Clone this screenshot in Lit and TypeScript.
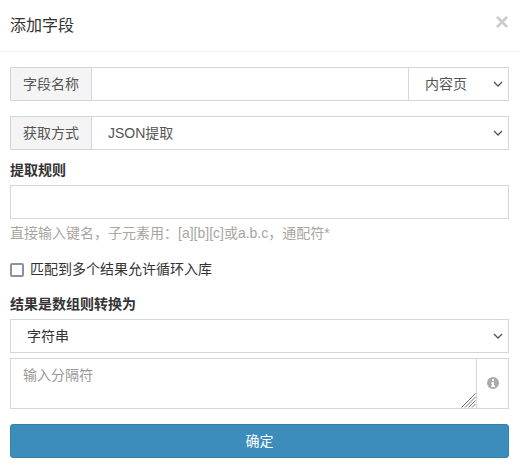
import { LitElement, html, css } from "lit";
import { customElement } from "lit/decorators.js";

const chevron =
  "data:image/svg+xml,%3Csvg xmlns='http://www.w3.org/2000/svg' width='10' height='6' viewBox='0 0 10 6'%3E%3Cpath d='M1 1l4 4 4-4' fill='none' stroke='%23555' stroke-width='1.3'/%3E%3C/svg%3E";

@customElement("app-root")
export class AppRoot extends LitElement {
  static styles = css`
    :host {
      display: block;
      width: 520px;
      height: 466px;
      background: #fff;
      font-family: "Liberation Sans", "Noto Sans CJK SC", sans-serif;
      font-size: 14px;
      line-height: 20px;
      color: #333;
      overflow: hidden;
    }
    * { box-sizing: border-box; }
    .header {
      height: 52px;
      padding: 0 11px 0 10px;
      border-bottom: 1px solid #f4f4f4;
      display: flex;
      align-items: center;
      justify-content: space-between;
    }
    .title { font-size: 16px; color: #333; font-weight: 400; }
    .close {
      font-size: 24px;
      font-weight: 700;
      color: #000;
      opacity: 0.2;
      line-height: 1;
      margin: -8px 0 0 0;
    }
    .body {
      padding: 15px 11px 0 10px;
      display: flex;
      flex-direction: column;
    }
    .group { display: flex; height: 34px; }
    .addon {
      flex: none;
      display: flex;
      align-items: center;
      justify-content: center;
      background: #f4f4f4;
      border: 1px solid #d2d6de;
      border-right: 0;
      color: #555;
      width: 81px;
    }
    .control {
      display: block;
      width: 100%;
      height: 34px;
      min-width: 0;
      padding: 6px 12px;
      border: 1px solid #d2d6de;
      border-radius: 0;
      background: #fff;
      color: #555;
      font: inherit;
      outline: none;
    }
    select.control {
      appearance: none;
      padding-left: 16px;
      background-repeat: no-repeat;
      background-position: right 5px center;
    }
    .control::placeholder { color: #999; opacity: 1; }
    .grow { flex: 1; }
    .side { flex: none; width: 101px; margin-left: -1px; }
    .mt15 { margin-top: 15px; }
    .label { font-weight: 700; margin-top: 10px; height: 20px; }
    .rule { margin-top: 5px; }
    .help { color: #a9a5a0; margin-top: 4px; height: 20px; white-space: nowrap; }
    .check {
      display: flex;
      align-items: center;
      gap: 6px;
      margin-top: 17px;
      height: 20px;
      color: #333;
    }
    .check input {
      appearance: none;
      margin: 0;
      width: 14px;
      height: 14px;
      border: 2px solid #8f8f9d;
      border-radius: 2px;
      background: #fff;
    }
    .check span { margin-top: -2px; }
    .label.second { margin-top: 14px; }
    .format { margin-top: 5px; color: #333; }
    .area-group { display: flex; margin-top: 5px; height: 51px; }
    .area-wrap { position: relative; flex: 1; min-width: 0; }
    textarea.control { height: 51px; resize: none; }
    .grip {
      position: absolute;
      right: 1px;
      bottom: 1px;
      width: 15px;
      height: 15px;
      display: block;
    }
    .info {
      flex: none;
      width: 33px;
      margin-left: -1px;
      border: 1px solid #d2d6de;
      display: flex;
      align-items: center;
      justify-content: center;
      color: #aaa;
    }
    .info svg { display: block; width: 12px; height: 12px; margin-top: -1px; }
    .submit {
      margin-top: 15px;
      height: 34px;
      width: 100%;
      border: 1px solid #367fa9;
      border-radius: 3px;
      background: #3c8dbc;
      color: #fff;
      font: inherit;
    }
  `;

  render() {
    const arrow = `background-image:url("${chevron}")`;
    return html`
      <div class="header">
        <div class="title">添加字段</div>
        <div class="close">×</div>
      </div>
      <div class="body">
        <div class="group">
          <div class="addon">字段名称</div>
          <input class="control grow" type="text" />
          <select class="control side" style=${arrow}><option>内容页</option></select>
        </div>
        <div class="group mt15">
          <div class="addon">获取方式</div>
          <select class="control grow" style=${arrow}><option>JSON提取</option></select>
        </div>
        <div class="label">提取规则</div>
        <input class="control rule" type="text" />
        <div class="help">直接输入键名，子元素用：[a][b][c]或a.b.c，通配符*</div>
        <label class="check"><input type="checkbox" /><span>匹配到多个结果允许循环入库</span></label>
        <div class="label second">结果是数组则转换为</div>
        <select class="control format" style=${arrow}><option>字符串</option></select>
        <div class="area-group">
          <div class="area-wrap">
            <textarea class="control" placeholder="输入分隔符"></textarea>
            <svg class="grip" viewBox="0 0 15 15" aria-hidden="true">
              <path d="M0.5 14.5L14.5 0.5M4 14.5L14.5 4M7.5 14.5L14.5 7.5M11 14.5L14.5 11" stroke="#777" stroke-width="1" fill="none"/>
            </svg>
          </div>
          <div class="info">
            <svg viewBox="0 0 24 24" aria-hidden="true">
              <path fill="currentColor" fill-rule="evenodd" d="M12 0a12 12 0 1 0 0 24 12 12 0 0 0 0-24zm-2 4h4v4h-4zM8.5 10.5H14V17h2v3H8.5v-3H10v-3.5H8.5z"/>
            </svg>
          </div>
        </div>
        <button class="submit">确定</button>
      </div>
    `;
  }
}
